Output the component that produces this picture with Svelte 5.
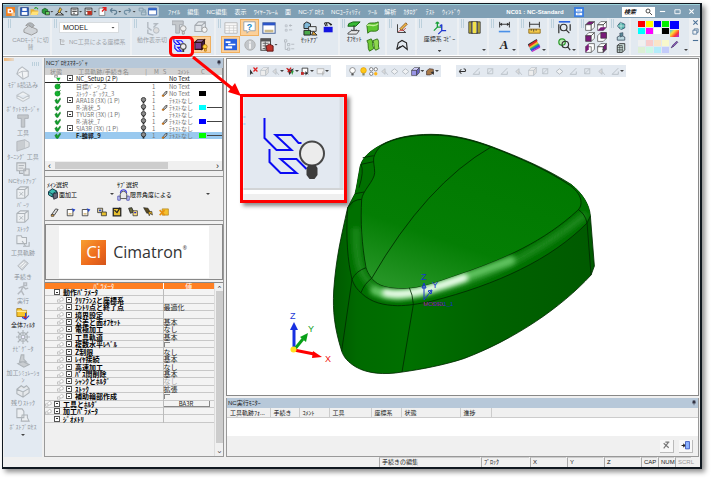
<script>
  const G = '#b3bac1';
  // Each icon is a list of [path, fill, stroke, stroke width] on a 16 x 16 grid.
  const cube = (a, b, c) => [
    ['M1 6L6 1H15L10 6Z', a, '#333', 1],
    ['M1 6H10V15H1Z', b, '#333', 1],
    ['M10 6L15 1V10L10 15Z', c, '#333', 1]
  ];
  const icons = {
    app: [['M0 0H16V16H0Z', '#f08020'], ['M3 3H10L13 7V11H3Z', '#fff'], ['M6 6H9V9H6Z', '#d05010'], ['M10 10H16V16H10Z', '#f7c48a']],
    save: [['M1 1H15V15H1Z', '#2c5cc0', '#12306e', 1], ['M4 2H12V7H4Z', '#fff'], ['M3 9H13V14H3Z', '#fff']],
    open: [['M1 4H7L8 6H14V14H1Z', '#e8b030'], ['M1 14L4 8H16L13 14Z', '#ffe27a'], ['M8 3C10 0 13 1 14 4', 'none', '#2a9a2a', 2]],
    part: [['M2 5L7 2L12 5V10L7 13L2 10Z', '#2a9a3a', '#104a18', 1], ['M8 8H15V14H8Z', '#62c85a', '#111', 1]],
    draft: [['M1 14H15L8 9Z', '#fff', '#111', 1.5], ['M5 9L9 1L12 4L8 11Z', '#f0c030', '#222', 1]],
    nc: [['M2 2H14V14H2Z', '#fff', '#222', 1.5], ['M4 5H12M4 8H12M5 11H9', 'none', '#333', 1.5]],
    nc2: [['M2 2H14V14H2Z', '#fff', '#222', 1.5], ['M4 5H12M4 8H12', 'none', '#333', 1.5], ['M6 7H14V14H6Z', '#c03020']],
    exit: [['M2 2H12V15H2Z', '#fff', '#555', 1], ['M7 8L14 1M8 1H14V7', 'none', '#e02020', 2.5]],
    undo: [['M2 6H10C15 6 15 13 9 13M2 6L6 2M2 6L6 10', 'none', '#5f7d92', 2]],
    redo: [['M14 6H6C1 6 1 13 7 13M14 6L10 2M14 6L10 10', 'none', '#6f8ea3', 2]],
    macro: [['M2 2H9V7H2ZM6 9H14V14H6Z', 'none', '#7c98aa', 1.5], ['M9 5H13V9', 'none', '#7c98aa', 1.5]],
    win: [['M1 2H15V14H1Z', '#fff', '#3560b0', 1.5], ['M1 2H15V6H1Z', '#2f62c8']],
    dockwin: [['M0 0H16V16H0Z', '#3d7fe0'], ['M3 3H13V7H3ZM3 9H13V13H3Z', '#fff'], ['M5 5H11M5 11H9', 'none', '#3d7fe0', 1]],
    cad: [['M1 9L6 5L15 9V12L9 15L1 12Z', '#d0d4d8', '#999', 1], ['M3 5C5 1 10 1 12 5L9 7L6 4Z', '#aeb4b9', '#999', 1]],
    axes: [['M3 2V13H11M3 2L1 4M3 2L5 4', 'none', '#999', 1.3], ['M6 4H10V8H6Z', 'none', '#aaa', 1]],
    motion: [['M3 1V7L7 10M3 9V13L9 15M9 3H13L9 7', 'none', G, 1.5], ['M9 10A3 3 0 1 0 15 10A3 3 0 1 0 9 10', '#ddd', G, 1]],
    tbulb: [['M0 1H12V5H8V14H4V5H0Z', '#c4c8cc', '#a5aab0', 1], ['M9 9A3 3 0 1 0 15 9A3 3 0 1 0 9 9M11 12H13V15H11Z', '#eee', '#999', 1]],
    boxbulb: [['M1 5L5 1H13V8L9 12H1ZM1 5H9V12M9 5L13 1', '#e4e8ec', '#a5aab0', 1.2], ['M9 10A3 3 0 1 0 15 10A3 3 0 1 0 9 10', '#f4f4f4', '#999', 1]],
    path: [['M2 0V5L5 8H9L5 4H10L12 6M3 8V12L6 15H10L6 11H10', 'none', '#1414ff', 1.2], ['M9 10A3 3 0 1 0 15 10A3 3 0 1 0 9 10', '#eee', '#555', 1.2], ['M11 13H13V16H11Z', '#333']],
    solid: [['M1 5L4 2H12L9 5Z', '#b58ac8', '#311', 1.2], ['M1 5H9V13H1Z', '#77458c', '#311', 1.2], ['M9 5L12 2V10L9 13Z', '#42204f', '#311', 1.2], ['M10 10A2.500 2.500 0 1 0 15 10A2.500 2.500 0 1 0 10 10M12 12H14V15H12Z', '#ffd23c', '#a60', 0.8]],
    grid: [['M1 2H15V14H1Z', '#fafafa', '#b5b5b5', 1], ['M1 5H15M1 8H15M1 11H15M6 5V14M11 5V14', 'none', '#c8c8c8', 0.8]],
    bubble: [['M1 1H15V12H8L5 15V12H1Z', '#fff', '#8b99a5', 1]],
    bar: [['M1 2H15V14H1Z', '#fff', '#4a68a0', 1.2], ['M1 2H15V5H1Z', '#2c55c8'], ['M3 10H13V13H3Z', '#c9b98a']],
    tree: [['M0 1H16V15H0Z', '#2a62e0'], ['M2 4H8V6H2ZM5 7H14V9H5ZM2 10H10V13H2Z', '#fff']],
    info: [['M1 8A7 7 0 1 0 15 8A7 7 0 1 0 1 8', '#c2c6ca', '#aaa', 1], ['M7 3H9V5H7ZM7 6H9V13H7Z', '#fff']],
    tabred: [['M1 1H12V14H1Z', '#eee', '#444', 1.2], ['M1 1H12V4H1Z', '#555'], ['M3 6H10M3 9H7M3 12H6M6 4V14', 'none', '#555', 1], ['M7 9L11 7L15 9V15H8Z', '#c0342a', '#511', 1]],
    dots: [['M2 3H5V6H2ZM2 10H5V13H2Z', 'none', G, 1.2], ['M8 4H13M8 11H13M10 2V6', 'none', G, 1.5]],
    tdots: [['M2 1H5V4H2ZM6 6H9V9H6ZM6 12H9V15H6Z', 'none', G, 1.2], ['M3 4V14H6M11 7H15M11 13H15', 'none', G, 1.2]],
    setup: [['M1 3L4 1L8 3V8H1Z', '#7fb8d8', '#222', 1], ['M6 6H14V11H6Z', '#e8eef2', '#333', 1], ['M1 10H8V15H1Z', '#4aa84a', '#222', 1], ['M11 11L15 15H9Z', '#e0a030', '#333', 1]],
    robot: [['M1 7H14V15H1Z', '#1414e0'], ['M2 1L4 6M5 1L6 6M3 1H8L12 5M8 1L13 4', 'none', '#222', 1.5]],
    offset: [['M2 3L7 1H15L10 6H1Z', '#36b836', '#0a5a0a', 1], ['M8 5V13M8 13L5 10M8 13L11 10', 'none', '#333', 1.3], ['M1 14L5 11H14L11 15H1Z', '#e8e8e8', '#444', 1]],
    leaf: [['M1 5C4 0 8 4 14 1V10C10 14 6 9 2 14Z', '#5fc832', '#2a6a12', 1], ['M1 5C6 3 9 8 14 3', 'none', '#c5f09a', 1.5]],
    leaf2: [['M1 3L6 1C9 4 6 8 9 12L4 15C1 11 4 7 1 3Z', '#6ecb35', '#2a6a12', 1], ['M8 3L13 1C16 5 13 8 15 12L11 14C8 11 10 7 8 3Z', '#8fd84f', '#2a6a12', 1]],
    sketch: [['M2 3V14H13L7 9L12 4', 'none', '#333', 1.2], ['M5 9L13 1L15 3L7 11Z', '#f2b548', '#7a4a10', 1], ['M3 13C7 9 9 14 13 8', 'none', '#d02020', 1]],
    curve: [['M1 14L3 5L8 2L14 5L15 14L9 9L4 12', 'none', '#222', 1.5], ['M1 14L6 10', 'none', '#222', 2]],
    ucs: [['M5 1V7M5 1L3 3M5 1L7 3M5 7L1 11M5 7H10', 'none', '#18a038', 1.5], ['M10 4V11H15M10 4L8 6M10 11L6 15', 'none', '#2038d0', 1.5]],
    slot: [['M1 1H15V15H1Z', '#c8b832', '#333', 1], ['M4 1H12V15H4Z', '#8a8a88', '#333', 1], ['M6 1H10V15H6Z', '#f2e24a']],
    dim: [['M2 1V8M14 1V8M2 4H14', 'none', '#333', 1.2], ['M2 4L5 2V6ZM14 4L11 2V6Z', '#333'], ['M1 12H15V14H1Z', '#4a90e8']],
    ruler: [['M2 1V8M14 1V8M2 4H14', 'none', '#333', 1.2], ['M1 10H15V15H1Z', '#f2c84a', '#8a6510', 1], ['M4 10V12M7 10V13M10 10V12', 'none', '#333', 1]],
    rainbow: [['M1 7L11 1L12 3L2 10Z', '#333'], ['M2 8L11 2L12 5L3 11Z', '#e02828'], ['M3 10L12 4L13 7L4 12Z', '#f0c030'], ['M3 12L13 6L14 8L4 14Z', '#30c060'], ['M4 13L14 7L15 10L5 15Z', '#3050e0'], ['M5 15L15 9V11L6 16Z', '#c030c0']],
    zoomfit: [['M1 0H15V2H1Z', '#2a62e0'], ['M3 8A4 4 0 1 0 11 8A4 4 0 1 0 3 8M10 11L14 15M1 4V15M15 4V12', 'none', '#333', 1.5]],
    zoomsel: [['M1 5A4 4 0 1 0 9 5A4 4 0 1 0 1 5', '#bfe8b8', '#2a9a2a', 1.5], ['M5 8A4 4 0 1 0 13 8A4 4 0 1 0 5 8M12 11L15 15', 'none', '#333', 1.5]],
    globe: [['M2 8L7 2L14 5V11L8 14Z', '#4fb0a8', '#235', 1], ['M2 8H14M8 2V14', 'none', '#e8f8f8', 1]],
    cyl: [['M2 8L8 5L14 8V13H2Z', '#bcd8e0', '#345', 1.2], ['M6 2L11 1V6L7 8Z', '#5a8a9a', '#345', 1]],
    sheet: [['M2 4L6 1H14V11L10 15H2Z', '#c8dcd8', '#222', 1.3], ['M2 7H11M2 11H11M6 4V15M2 4H10V15', 'none', '#333', 1]],
    pen: [['M2 14L5 9L12 2L14 4L7 11Z', '#8858b8', '#325', 1]],
    model: [['M1 9L8 15L14 12V6L7 1L3 4Z', '#f1f3f5', '#b5bac0', 1.2], ['M1 9L7 6L14 6M7 6L8 15', 'none', '#b5bac0', 1]],
    pocket: [['M1 6L8 2L15 6L8 10ZM1 6V9L8 13L15 9V6', '#eef1f3', '#c0c6cb', 1.2]],
    tool: [['M2 1H14V5H10V15H6V5H2Z', '#c4c8cc', '#a9aeb3', 1]],
    turn: [['M1 4L10 2V12L1 15Z', '#c9cdd1', '#b0b5ba', 1], ['M10 2L15 5V10L10 12', '#dfe2e5', '#b0b5ba', 1]],
    ncset: [['M1 1H11V10H1ZM4 10V13H8M9 8H15V15H9Z', '#e2e5e8', '#a9aeb3', 1.2], ['M3 4H9M3 7H8', 'none', '#a9aeb3', 1]],
    box: [['M1 4L5 1H14V10L10 14H1ZM1 4H10V14M10 4L14 1', '#eceff2', '#adb3b8', 1.2], ['M4 7L8 11M8 7L4 11', 'none', '#adb3b8', 1]],
    folder: [['M1 2H6L7 4H12V11H1Z', '#eceff2', '#adb3b8', 1.2], ['M7 8L11 14M8 14H15V9', 'none', '#adb3b8', 1.3]],
    proc: [['M2 9L9 2L14 6L7 14Z', '#d2d6da', '#b0b5ba', 1], ['M4 9L9 5M6 11L11 6', 'none', '#fff', 1]],
    run: [['M9 1H12V4H9ZM3 7L8 5L11 8L14 7M8 5L6 10L9 15M6 10L2 14', 'none', '#b5bac0', 1.7]],
    filter: [['M1 3H6L7 5H12V12H1Z', '#f7c52c', '#a97a10', 1], ['M1 6H12', 'none', '#fff1a8', 1.5], ['M11 8V15L7 13M11 15L15 11', 'none', '#2040e0', 1.3], ['M9 12H12V14H9Z', '#e02020']],
    wheel: [['M3 8A5 5 0 1 0 13 8A5 5 0 1 0 3 8M8 0V16M0 8H16M2 2L14 14M14 2L2 14', 'none', '#aeb4b9', 1.3], ['M6 8A2 2 0 1 0 10 8A2 2 0 1 0 6 8', '#eef', '#aeb4b9', 1]],
    sim: [['M6 1H9V6L12 9H4ZM2 11L8 9L15 12L9 15Z', '#c9cdd1', '#adb3b8', 1.2]],
    rest: [['M1 6L6 2L9 4L12 2L15 5V10L8 15L1 11ZM1 6L8 9L15 5M8 9V15', '#e5e8eb', '#adb3b8', 1.2]],
    post: [['M1 1H7L9 4V11H1ZM7 8H13V11L15 15H6Z', '#eceff2', '#adb3b8', 1.2]],
    ok: [['M2 8L6 4L8 9L14 2L15 5L9 15L5 14Z', '#12a02c', '#0a6a1a', 1]],
    okball: [['M2 8A6 6 0 1 0 14 8A6 6 0 1 0 2 8', '#14b430', '#0a7a1a', 1], ['M9 6L15 1', 'none', '#0a7a1a', 2]],
    oksetup: [['M1 1H8V5H1Z', '#eee', '#555', 1], ['M5 6L15 6L10 15Z', '#14b430']],
    bulb: [['M3 6A5 5 0 1 0 13 6A5 5 0 1 0 3 6', '#8a8a8a', '#222', 1.8], ['M6 11H10V15H6Z', '#222']],
    bulboff: [['M3 6A5 5 0 1 0 13 6A5 5 0 1 0 3 6', '#fff', '#666', 1.2], ['M6 11H10V15H6Z', '#555']],
    bulbon: [['M3 6A5 5 0 1 0 13 6A5 5 0 1 0 3 6', '#ffc818', '#d89000', 1], ['M6 11H10V15H6Z', '#886']],
    mill: [['M3 13L10 4L14 3L13 8L6 14Z', '#bbb', '#222', 1.4], ['M2 11H7V15H2Z', '#c8751c']],
    solidg: [['M2 5L7 1L13 4V8L7 12L2 9Z', '#3cbcb0', '#134', 1.3], ['M8 8L14 6V13L9 15Z', '#667', '#223', 1], ['M2 5L7 8L13 4M7 8V12', 'none', '#134', 1]],
    arch: [['M1 10H4V15H1ZM12 10H15V15H12Z', '#cdd6ff', '#44a', 1], ['M4 13V8A4 4 0 0 1 12 8V13Z', '#e8e8e8', '#555', 1.2], ['M4 6C5 1 11 1 12 6', 'none', '#44d', 1.3]],
    hand: [['M2 13L9 3L13 4L7 13Z', '#ddd', '#333', 1.3], ['M2 12H6V15H2Z', '#e0a040', '#333', 1]],
    form: [['M2 4H11V14H2Z', '#fff', '#333', 1.3], ['M9 2L15 4L12 8Z', '#2244cc'], ['M4 11H9', 'none', '#ca6', 2]],
    pair: [['M1 2H9V9H1Z', '#ffe9a0', '#333', 1.3], ['M7 8H15V14H7Z', '#e8c030', '#333', 1.3], ['M3 4H7V7H3Z', '#2244cc']],
    film: [['M2 2H14V14H2Z', '#e8c030', '#222', 2], ['M4 5L8 9L13 1', 'none', '#222', 2]],
    calc: [['M1 2L6 1L9 8L4 10Z', '#6a6a40', '#222', 1.3], ['M8 6H15V14H8Z', '#ffe080', '#333', 1.2], ['M10 9H13', 'none', '#22c', 2]],
    bug: [['M1 1L8 2L12 9L6 10Z', '#5a4a20', '#222', 1], ['M8 8L10 14L12 10L15 13L14 7Z', '#e8b020', '#222', 1]],
    close: [['M5 3H15V13H5Z', '#f4c030', '#a97a10', 1], ['M1 5L9 13M9 5L1 13', 'none', '#e89010', 2.5]],
    link: [['M1 9H7V14H1ZM5 8L10 3L14 5V10L8 12', '#fff', '#a8a8a8', 1.5]],
    pickx: [['M2 4V14L5 11L8 13Z', '#222'], ['M8 1L15 8M15 1L8 8', 'none', '#e02020', 2.2]],
    pickcube: cube('#eee', '#eee', '#ddd').map((p) => [p[0], p[1], G, 1]),
    pickg: [['M3 8L9 3V13ZM9 8L14 14', '#ddd', G, 1.3]],
    pickr: [['M2 2L8 5L14 2L11 8L6 14Z', '#333'], ['M1 2L9 9M3 9L9 1', 'none', '#d02020', 2.2], ['M9 8L14 6L11 14Z', '#2a9a3a']],
    pickb: [['M2 2H12V11H2Z', '#fff', '#333', 1.5], ['M8 7V15L11 12L14 14Z', '#222'], ['M0 9H5V14H0Z', '#c02828']],
    pickl: [['M2 3H14V12H2Z', '#f4f4f4', '#aaa', 1.3], ['M12 8V15', 'none', '#aaa', 1.5]],
    bulbs: [['M1 4A3 3 0 1 0 7 4A3 3 0 1 0 1 4M9 4A3 3 0 1 0 15 4A3 3 0 1 0 9 4M1 12A3 3 0 1 0 7 12A3 3 0 1 0 1 12', '#fff', '#555', 1.2], ['M9 12A3 3 0 1 0 15 12A3 3 0 1 0 9 12', '#ffb618']],
    dia: [['M8 3L14 8L8 13L2 8Z', '#f0f2f4', G, 1.6]],
    vcube: cube('#d6d4ff', '#9a96e8', '#6a66c4'),
    vbrown: [['M1 7L6 3L13 4V11L7 14H1Z', '#a87a48', '#433', 1.2], ['M8 9L14 8V14Z', '#333']],
    back: [['M2 8H11C15 8 14 3 10 3M2 8L6 4M2 8L6 12', 'none', '#333', 1.8]],
    snap: [['M2 13L13 2M2 13H13V8', 'none', G, 1.5]],
    snap2: [['M3 3H12V12H3ZM3 12L12 3', 'none', G, 1.3]],
    clear: [['M3 13L11 3M3 4L12 12M6 2H13', 'none', '#777', 2]],
    door: [['M8 1H15V14H8Z', '#8eb4ff', '#1f3fb0', 1.3], ['M1 8H7M7 8L4 5M7 8L4 11', 'none', '#222', 1.8]],
    lens: [['M2 6A4 4 0 1 0 10 6A4 4 0 1 0 2 6M9 9L14 14', 'none', '#222', 1.6]],
    pin: [['M5 2H11V8H5ZM3 8H13M8 8V14', '#334', '#334', 1.4]],
    cubeTop: cube('#7a1a7a', '#fff', '#fff'),
    cubeFront: cube('#fff', '#7a1a7a', '#fff'),
    cubeSide: cube('#fff', '#fff', '#7a1a7a'),
    cubeBot: [['M1 6L6 1H15L10 6ZM1 6H10V15H1ZM10 6L15 1V10L10 15', '#fff', '#333', 1], ['M1 15L6 10H15L10 15Z', '#7a1a7a']],
    cubeBack: [['M1 6L6 1H15V10L10 15H1Z', '#fff', '#333', 1], ['M6 1H15V10H6Z', '#7a1a7a', '#333', 1]],
    cubeLeft: [['M1 6L6 1H15V10L10 15H1ZM1 6H10V15', '#fff', '#333', 1], ['M1 6L6 1V10L1 15Z', '#7a1a7a']],
    minus: [['M2 8H14', 'none', 'currentColor', 2.5]],
    max: [['M2 4H14V13H2Z', 'none', 'currentColor', 2]],
    restore: [['M5 5V2H14V10H11M2 5H11V14H2Z', 'none', 'currentColor', 1.8]],
    cross: [['M3 3L13 13M13 3L3 13', 'none', 'currentColor', 2.5]]
  };

  const menus = ['ﾌｧｲﾙ', '編集', 'NC編集', '表示', 'ﾜｲﾔｰﾌﾚｰﾑ', '面', 'NC-ﾌﾟﾛｾｽ', 'NCﾕｰﾃｨﾘﾃｨ', 'ﾂｰﾙ', '解析', 'ｶﾀﾛｸﾞ', 'ﾃｽﾄ', 'ｳｨﾝﾄﾞｳ'];
  const quick = ['save', 'open', 'part+', 'draft+', 'nc+', 'nc2+', 'exit', 'undo+', 'redo+', 'macro', 'win'];
  const swatches = ['#f00', '#ff0', '#0000f0', '#0e0', '#0ff', '#f0f', '#fff', '#000'];
  const pale = ['#f0f0f0', '#f8cccc', '#fae4c8', '#f8f8cc', '#dcf0d4', '#ccf8e4', '#b4ecfa', '#c4ccfa'];
  const dock = [
    ['model', 'ﾓﾃﾞﾙ読込み'], ['pocket', 'ﾎﾟｹｯﾄﾏﾈｰｼﾞｬ'], ['tool', '工具'], ['turn', 'ﾀｰﾆﾝｸﾞ 工具'],
    ['ncset', 'NCｾｯﾄｱｯﾌﾟ'], ['box', 'ﾊﾟｰﾂ'], ['box', 'ｽﾄｯｸ'], ['folder', '工具軌跡'], ['proc', '手続き'],
    ['run', '実行'], ['filter', '全体ﾌｨﾙﾀ', true], ['wheel', 'ﾅﾋﾞｹﾞｰﾀ'], ['sim', '加工ｼﾐｭﾚｰｼｮ ﾝ'], ['rest', '残りｽﾄｯｸ'], ['post', 'ﾎﾟｽﾄﾌﾟﾛｾｽ']
  ];
  const rows = [
    { st: 'oksetup', name: 'NC_Setup (2 P)', open: true, text: 'No Text', head: true },
    { st: 'okball', name: '目標ﾊﾟｰﾂ_2', n: '1', text: 'No Text' },
    { st: 'okball', name: 'ｽﾄｯｸ - ﾎﾞｯｸｽ_3', n: '1', mill: true, text: 'No Text', color: '#000' },
    { st: 'ok', name: 'ARA18 (3X) (1 P)', open: true, bulb: true, n: '1', text: 'ﾃｷｽﾄなし' },
    { st: 'ok', name: 'R-清状_5', bulb: true, n: '1', mill: true, text: 'ﾃｷｽﾄなし', color: '#0ff', line: true },
    { st: 'ok', name: 'TYU5R (3X) (1 P)', open: true, bulb: true, n: '1', text: 'ﾃｷｽﾄなし' },
    { st: 'ok', name: 'R-清状_7', bulb: true, n: '1', mill: true, text: 'ﾃｷｽﾄなし', color: '#00f', line: true },
    { st: 'ok', name: 'SIA3R (3X) (1 P)', open: true, bulb: true, n: '1', text: 'ﾃｷｽﾄなし' },
    { st: 'ok', name: 'F-輪郭_9', bulb: true, n: '1', mill: true, text: 'ﾃｷｽﾄなし', color: '#0f0', line: true, sel: true }
  ];
  const params = [
    ['動作ﾊﾟﾗﾒｰﾀ', '', 'root'], ['ｸﾘｱﾗﾝｽと座標系', ''], ['ｴﾝﾄﾘ点と終了点', '最適化'], ['境界設定', ''],
    ['公差と面ｵﾌｾｯﾄ', '基本'], ['電極加工', 'なし'], ['工具軌道', '基本'], ['複数水平ﾚﾍﾞﾙ', 'check'],
    ['Z制限', 'なし'], ['ﾚｲﾔ接続', '基本'], ['高速加工', 'なし'], ['ﾊﾟｽ間削除', '基本'],
    ['ｼｬﾝｸとﾎﾙﾀﾞ', 'なし', 'dim'], ['ｽﾄｯｸ', '拡張'], ['補助輪部作成', 'check'],
    ['工具とﾎﾙﾀﾞ', 'button', 'top'], ['加工ﾊﾟﾗﾒｰﾀ', '', 'top'], ['ｼﾞｵﾒﾄﾘ', '', 'root']
  ];
  const procTools = ['hand', 'form', 'form', 'pair', 'film', 'calc', 'bug', 'close'];
  const viewTools = [
    ['pickx', 'pickcube', 'pickg+', 'pickr+', 'pickb+', 'pickl+'],
    ['bulboff', 'bulbon', 'bulbs', 'pickg', 'dia', 'dia', 'vcube+', 'vbrown+'],
    ['back', 'snap', 'snap2', 'snap', 'pickg', 'pickcube', 'snap2', 'dia', 'snap', 'snap2', 'pickg', 'snap+']
  ];
  const monitor = ['工具軌跡ﾌｫ...', '手続き', 'ｺﾒﾝﾄ', '工具', '座標系', '状態', '進捗', ''];
</script>

{#snippet icon(name, size = 12)}
  <svg class="ico" width={size} height={size} viewBox="0 0 16 16" aria-hidden="true">
    {#each icons[name] as [d, fill, stroke, w]}
      <path {d} {fill} stroke={stroke ?? 'none'} stroke-width={w ?? 0} />
    {/each}
    {#if name === 'bubble'}<text x="8" y="11" class="q">?</text>{/if}
  </svg>
{/snippet}

{#snippet tool(key, size = 10)}
  <button class="tb" aria-label={key}>
    {@render icon(key.replace('+', ''), size)}
    {#if key.endsWith('+')}<span class="caret"></span>{/if}
  </button>
{/snippet}

<div class="page">
  <div class="window">
    <header class="title">
      <span class="logo">{@render icon('app', 9)}</span>
      <div class="quick">
        {#each quick as q}{@render tool(q, 9)}{/each}
      </div>
      <nav>
        {#each menus as m}<a href="#menu">{m}</a>{/each}
      </nav>
      <div class="caption">NC01 : NC-Standard {@render icon('dockwin', 10)}</div>
      <label class="search"><input aria-label="検索" value="検索" />{@render icon('lens', 8)}</label>
      <div class="winbtns">
        <button class="tb" aria-label="Minimize">{@render icon('minus', 7)}</button>
        <button class="tb" aria-label="Maximize">{@render icon('max', 7)}</button>
        <button class="tb" aria-label="Close">{@render icon('cross', 7)}</button>
      </div>
    </header>

    <div class="ribbon">
      <section class="g g1">
        <i class="grip"></i>
        <button class="big dim">{@render icon('cad', 15)}<span>CADﾓｰﾄﾞに切<br />替</span></button>
      </section>
      <section class="g g2">
        <i class="grip"></i>
        <div class="ucsbox">
          <div class="combo"><select aria-label="UCS"><option>MODEL</option></select><span class="caret"></span></div>
          <button class="inline dim">{@render icon('axes', 8)} NC工具による座標系</button>
        </div>
      </section>
      <section class="g g3">
        <i class="grip"></i>
        <button class="big dim motion">{@render icon('motion', 15)}<span>動作表示切</span></button>
        <div class="cells two">
          {@render tool('tbulb', 15)}{@render tool('boxbulb', 14)}
          {@render tool('path', 15)}<span class="on">{@render tool('solid', 14)}</span>
        </div>
      </section>
      <section class="g g4">
        <i class="grip"></i>
        <div class="cells four">
          {@render tool('grid', 14)}<span class="on">{@render tool('bubble', 13)}</span>{@render tool('bar', 14)}{@render tool('dots', 10)}
          <span class="on">{@render tool('tree', 13)}</span>{@render tool('info', 12)}{@render tool('tabred+', 14)}{@render tool('tdots', 12)}
        </div>
        <button class="big">{@render icon('setup', 15)}<span>ｾｯﾄｱﾌﾟ</span></button>
        <div class="robot">{@render tool('robot', 11)}</div>
      </section>
      <section class="g g5">
        <i class="grip"></i>
        <button class="big">{@render icon('offset', 14)}<span>ｵﾌｾｯﾄ</span></button>
        <div class="col">{@render tool('leaf', 14)}{@render tool('leaf2', 14)}</div>
      </section>
      <section class="g g6"><i class="grip"></i><div class="col">{@render tool('sketch', 12)}{@render tool('curve', 12)}</div></section>
      <section class="g g7">
        <i class="grip"></i>
        <button class="big wide">{@render icon('ucs', 14)}<span>座標系 ｺﾋﾟｰ</span><span class="caret"></span></button>
      </section>
      <section class="g s"><i class="grip"></i><div class="col">{@render tool('slot', 13)}<span></span></div><span class="caret"></span></section>
      <section class="g s"><i class="grip"></i><div class="col">{@render tool('dim', 13)}<button class="tb letter">A</button></div><span class="caret"></span></section>
      <section class="g s"><i class="grip"></i><div class="col">{@render tool('ruler', 13)}{@render tool('rainbow', 14)}</div><span class="caret"></span></section>
      <section class="g s"><i class="grip"></i><div class="col">{@render tool('zoomfit', 13)}{@render tool('zoomsel', 13)}</div><span class="caret"></span></section>
      <section class="g s">
        <i class="grip"></i>
        <div class="cells cubes">
          {#each ['cubeTop', 'cubeBot', 'cubeFront', 'cubeBack', 'cubeLeft', 'cubeSide'] as c}{@render tool(c, 10)}{/each}
        </div>
        <span class="caret"></span>
      </section>
      <section class="g g13">
        <i class="grip"></i>
        <div class="cells one">{@render tool('globe', 10)}{@render tool('cyl', 10)}{@render tool('sheet', 10)}</div>
      </section>
      <section class="g g14">
        <div class="palette">
          <div class="sw">{#each swatches as c}<button aria-label={c} style="background:{c}"></button>{/each}</div>
          <div class="sw">{#each pale as c}<button aria-label={c} style="background:{c}"></button>{/each}</div>
        </div>
        <div class="current"><b></b><em></em>{@render icon('pen', 9)}</div>
        <span class="caret"></span>
      </section>
      <div class="mdi">
        <button class="tb" aria-label="Close document">{@render icon('cross', 7)}</button>
        <button class="tb" aria-label="Restore document">{@render icon('restore', 7)}</button>
        <button class="tb" aria-label="Minimize document">{@render icon('minus', 7)}</button>
      </div>
    </div>

    <div class="main">
      <aside class="dock">
        <i class="tab"></i>
        <i class="grip flat"></i>
        {#each dock as [ic, label, live]}
          <button class:live>{@render icon(ic, 14)}<span>{label}</span></button>
        {/each}
        <span class="caret"></span>
      </aside>

      <div class="side">
        <div class="bar">NCﾌﾟﾛｾｽﾏﾈｰｼﾞｬ {@render icon('pin', 6)}</div>
        <div class="list">
          <table class="nc">
            <thead>
              <tr><th class="c1">状態</th><th class="c2">工具軌跡/手続き名</th><th class="c3">|</th><th class="c4">M</th><th class="c5">S</th><th class="c6">ｺﾒﾝﾄ</th><th class="c7">C</th><th></th></tr>
            </thead>
            <tbody>
              {#each rows as r}
                <tr class:sel={r.sel} class:head={r.head}>
                  <td class="st">{@render icon(r.st, 7)}</td>
                  <td class:child={!r.open}>
                    {#if r.open}<button class="exp" aria-label="Collapse {r.name}"></button>{/if}{r.name}
                  </td>
                  <td>{#if r.bulb}{@render icon('bulb', 7)}{/if}</td>
                  <td class="num">{r.n ?? ''}</td>
                  <td>{#if r.mill}{@render icon('mill', 7)}{/if}</td>
                  <td class="txt">{r.text}</td>
                  <td>{#if r.color}<b class="chip" style="background:{r.color}"></b>{/if}</td>
                  <td>{#if r.line}<hr />{/if}</td>
                </tr>
              {/each}
            </tbody>
          </table>
          <div class="hscroll"><span>‹</span><i></i><span>›</span></div>
        </div>

        <div class="choose">
          <div class="pick">
            <label for="main">ﾒｲﾝ選択</label>
            <div>{@render icon('solidg', 12)}<select id="main"><option>面加工</option></select><span class="caret"></span></div>
          </div>
          <div class="pick more">
            <label for="sub">ｻﾌﾞ選択</label>
            <div>{@render icon('arch', 13)}<select id="sub"><option>限界角度による</option></select><span class="caret"></span></div>
          </div>
        </div>
        <div class="proctools">{#each procTools as t}{@render tool(t, 10)}{/each}</div>

        <div class="banner">
          <div><span class="ci">Ci</span><span class="brand">Cimatron<sup>®</sup></span></div>
        </div>

        <div class="params">
          <div class="ptable">
            <table>
              <thead><tr><th>ﾊﾟﾗﾒｰﾀ</th><th class="val">値</th></tr></thead>
              <tbody>
                {#each params as [name, value, kind]}
                  <tr>
                    <td class={kind ?? 'leafrow'}>
                      <span class="cell">
                        {#if kind !== 'root'}{@render icon('link', 7)}{/if}
                        <button class="exp" aria-label="Expand {name}"></button>{name}
                      </span>
                    </td>
                    <td class="v" class:off={kind === 'dim'}>
                      {#if value === 'check'}<input type="checkbox" aria-label={name} />
                      {:else if value === 'button'}<button class="ba">BA3R</button>
                      {:else}{value}{/if}
                    </td>
                  </tr>
                {/each}
              </tbody>
            </table>
          </div>
          <div class="vscroll"><span>‹</span><i></i><span>›</span></div>
        </div>
      </div>

      <div class="work">
        <div class="view">
          <svg class="scene" width="474" height="338" viewBox="226 58 474 338">
            <defs>
              <linearGradient id="top" x1="400" y1="40" x2="240" y2="505" gradientUnits="userSpaceOnUse">
                <stop offset="0" stop-color="#007800" /><stop offset="0.65" stop-color="#047e04" /><stop offset="1" stop-color="#259425" />
              </linearGradient>
              <linearGradient id="wall" x1="0" y1="0" x2="790" y2="0" gradientUnits="userSpaceOnUse">
                <stop offset="0" stop-color="#005800" /><stop offset="0.1" stop-color="#006a00" /><stop offset="0.3" stop-color="#007000" />
                <stop offset="0.6" stop-color="#006200" /><stop offset="1" stop-color="#005a00" />
              </linearGradient>
              <filter id="soft" x="-20%" y="-50%" width="140%" height="200%"><feGaussianBlur stdDeviation="8" /></filter>
              <clipPath id="rim"><path d="M50 260C44 350 50 420 63 475C72 500 82 510 92 517C120 545 160 553 200 554C230 554 260 548 300 541C500 490 660 415 768 306L778 285C778 255 765 240 745 215L750 245L742 266C640 360 520 415 380 462C320 483 270 502 220 503C170 503 140 495 122 472C112 458 108 450 105 440C92 370 88 300 92 235Z" /></clipPath>
            </defs>
            <g transform="translate(330 120) scale(.3334)" fill="none" stroke="#002a00" stroke-width="2.500">
              <path fill="url(#wall)" d="M85 150C88 110 120 88 150 72C190 50 240 40 300 40C370 40 430 58 480 76C570 110 650 145 720 190C755 218 775 250 778 285L790 435L780 462C690 560 550 655 400 712C340 732 270 745 213 753C160 762 110 758 75 738C50 723 38 708 32 690C10 620 5 570 8 510C15 410 30 350 50 260L72 218C78 195 80 175 85 150Z" />
              <path fill="#007000" stroke="none" d="M85 150C88 110 120 88 150 72L480 76L720 190C755 218 775 250 778 285L768 306C660 415 500 490 300 541C230 554 160 553 92 517L63 475C50 420 44 350 50 260L72 218C78 195 80 175 85 150Z" />
              <path fill="url(#top)" d="M150 74C190 51 240 42 300 42C370 42 430 60 480 78C570 112 650 148 718 194C738 210 750 225 750 245C750 255 746 262 740 268C640 360 520 415 380 462C320 483 270 502 220 503C170 503 140 495 122 472C112 458 108 450 105 440C92 370 88 300 92 235C94 210 130 180 131 155C131 135 126 125 128 110C132 95 140 85 150 74Z" />
              <g clip-path="url(#rim)" stroke-linecap="round" filter="none">
                <path stroke="#1a881a" stroke-width="22" filter="url(#soft)" d="M75 330C75 440 90 500 200 528C400 510 600 410 758 285" />
                <path stroke="#62c462" stroke-width="26" filter="url(#soft)" d="M130 508C200 545 300 505 540 418" />
                <path stroke="#f0fff0" stroke-width="22" filter="url(#soft)" d="M165 515C220 528 290 508 400 470" />
              </g>
              <path d="M768 306C660 415 500 490 300 541C260 549 230 554 200 554C160 553 120 545 92 517C78 505 70 495 63 475C50 420 44 350 50 260" />
              <path d="M768 306L778 285M742 266Q762 278 768 306L780 462M122 472Q285 190 480 78M63 475L32 690M105 440Q75 450 63 475M122 472Q100 488 90 515M235 500Q245 520 247 550L213 753M50 260Q65 235 92 235M72 218L100 213M95 110L128 104M90 130L128 122M84 200Q100 150 90 130" />
            </g>
            <g class="ax">
              <path d="M293 349V327" stroke="#1830e0" stroke-width="3" /><path d="M289 329L293 321L297 329Z" fill="#1830e0" />
              <path d="M293 349L302 338" stroke="#08a018" stroke-width="3" /><path d="M299 336L307 332L305 341Z" fill="#08a018" />
              <path d="M293 349L313 353" stroke="#f00" stroke-width="3" /><path d="M312 350L321 356L311 357Z" fill="#f00" />
              <circle cx="292.500" cy="348.500" r="3" fill="#ffe020" />
              <text x="289" y="318" fill="#2438d8">Z</text><text x="307" y="331" fill="#10a020">Y</text><text x="324" y="361" fill="#f01010">X</text>
              <path d="M423 299V284M423 299L430 290M421 287L423 282L425 287ZM427 290L431 289L430 293Z" stroke="#1838c8" fill="none" />
              <text x="420" y="279" fill="#1838c8">Z</text><text x="431" y="287" fill="#1838c8">Y</text>
              <text x="422" y="305" fill="#c02020" class="sm">MODEL</text><text x="423" y="305" fill="#1830c0" class="sm">UCS601_1</text>
            </g>
          </svg>
          <div class="floats">
            {#each viewTools as t}
              <div class="float">{#each t as k}{@render tool(k, 9)}{/each}</div>
            {/each}
          </div>
        </div>
        <div class="monitor">
          <div class="bar">NC実行ﾓﾆﾀｰ {@render icon('pin', 6)}</div>
          <div class="mbody">
            <table><thead><tr>{#each monitor as m, i}<th class="m{i}">{m}</th>{/each}</tr></thead></table>
          </div>
          <div class="mfoot">
            <button aria-label="Clear">{@render icon('clear', 9)}</button>
            <button aria-label="Exit">{@render icon('door', 9)}</button>
          </div>
        </div>
      </div>
    </div>

    <footer class="status">
      <span class="s1">手続きの編集</span><span class="s2">ﾌﾞﾛｯｸ</span><span class="s3">X</span><span class="s3">Y</span><span class="s3">Z</span>
      <span class="k">CAP</span><span class="k">NUM</span><span class="k off">SCRL</span>
    </footer>
  </div>

  <div class="mark"></div>
  <svg class="arrow" width="54" height="46" viewBox="0 0 54 46" aria-hidden="true">
    <path d="M1 1L42 34" stroke="#f00" stroke-width="3" /><path d="M49 40L36 36L43 27Z" fill="#f00" />
  </svg>
  <div class="callout">
    <svg width="100" height="103" viewBox="244 97 100 103" aria-hidden="true">
      <path d="M244 97H344V200H244Z" fill="#e3e9f1" />
      <path d="M340 97H344V188H340Z" fill="#d6dce3" /><path d="M244 188H344V190H244Z" fill="#d2d4d6" />
      <path d="M244 190H344V194H244Z" fill="#fff" /><path d="M244 194H344V200H244Z" fill="#efefef" />
      <path d="M244 116H246V118H244ZM244 123H246V125H244Z" fill="#a8dcf4" />
      <g fill="none" stroke="#0a0af4" stroke-width="2">
        <path d="M265 118V138L277 150H292L276 135H292L299 143H302" />
        <path d="M270 149V162L281 173H297L281 159H297L307 169" />
      </g>
      <circle cx="312.500" cy="153.500" r="12" fill="#ececec" stroke="#484848" stroke-width="2" />
      <path d="M309 165H316L318 168V175L315 179H310L307 175V168Z" fill="#3c3c3c" />
    </svg>
  </div>
</div>

<style>
  :global(body) { margin: 0; background: #fff; }
  * { box-sizing: border-box; }
  .page {
    position: relative; height: 100vh; padding: 3px 11px 9px 2px;
    font: 6px/8px 'Liberation Sans', 'Noto Sans CJK JP', sans-serif; color: #222; overflow: hidden;
  }
  button, input, select { font: inherit; color: inherit; margin: 0; padding: 0; border: 0; background: none; border-radius: 0; }
  select { appearance: none; }
  .ico { display: block; flex: none; }
  .q { font: bold 11px 'Liberation Sans', sans-serif; fill: #1687c4; text-anchor: middle; }
  .window {
    height: 100%; display: flex; flex-direction: column; border: 1px solid #101820; border-bottom-width: 2px; border-right-width: 2px;
    background: #f0f0f0; box-shadow: 3px 3px 5px rgba(0, 0, 0, 0.45);
  }
  .tb { display: flex; align-items: center; justify-content: center; }
  .caret { flex: none; width: 4px; height: 2px; background: #444; clip-path: polygon(0 0, 100% 0, 50% 100%); }

  .title { flex: none; height: 14px; display: flex; align-items: center; background: #7f9fb4; border-top: 1px solid #9fd4dc; padding: 0 5px 0 3px; color: #fff; }
  .logo { width: 12px; }
  .quick { display: flex; align-items: center; justify-content: space-between; width: 141px; height: 11px; padding: 0 2px; background: #b9cad6; border-radius: 2px; }
  nav { display: flex; flex: none; justify-content: space-between; width: 292px; margin-left: 9px; }
  nav a { color: #fff; text-decoration: none; white-space: nowrap; }
  .caption { flex: 1; display: flex; align-items: center; justify-content: center; gap: 10px; font-weight: bold; white-space: nowrap; padding-left: 8px; }
  .search { display: flex; align-items: center; width: 33px; height: 10px; padding: 0 2px; background: #fff; color: #111; }
  .search input { flex: 1; min-width: 0; height: 9px; font-style: italic; font-weight: bold; outline: 0; }
  .winbtns { display: flex; justify-content: space-between; width: 36px; margin-left: 4px; }

  .ribbon { flex: none; height: 38px; display: flex; background: #e9edf1; border-bottom: 1px solid #fff; overflow: hidden; }
  .g { position: relative; flex: none; display: flex; padding: 1px 0 1px 2px; background: #e2e9f0; border-right: 2px solid #edf0f3; }
  .grip { flex: none; width: 3px; height: 9px; background: repeating-linear-gradient(90deg, #bcd0dc 0 1px, transparent 1px 2px); }
  .g > .caret { position: absolute; right: 1px; bottom: 4px; }
  .g1 { width: 49px; padding-left: 5px; }
  .g2 { width: 80px; }
  .g3 { width: 84px; }
  .g4 { width: 124px; }
  .g5 { width: 47px; }
  .g6 { width: 30px; }
  .g7 { width: 42px; }
  .s { width: 30px; }
  .g13 { width: 22px; }
  .g14 { flex: 1 0 60px; padding-left: 7px; }
  .big { display: flex; flex-direction: column; align-items: center; flex: 1; line-height: 7px; padding-top: 2px; gap: 1px; white-space: nowrap; }
  .big .caret { margin-top: 6px; }
  .dim { color: #9aa0a6; }
  .motion { flex: 0 0 30px; }
  .ucsbox { display: flex; flex-direction: column; gap: 5px; padding: 3px 0 0 2px; width: 62px; }
  .combo { display: flex; align-items: center; height: 11px; padding: 0 3px; border: 1px solid #d8dcdf; background: #fff; font-size: 7px; }
  .combo select { flex: 1; min-width: 0; }
  .inline { display: flex; align-items: center; gap: 2px; white-space: nowrap; }
  .cells { display: grid; }
  .cells.two { grid-template-columns: 24px 20px; grid-template-rows: 17px 17px; }
  .cells.four { grid-template-columns: 19px 19px 20px 20px; grid-template-rows: 17px 17px; }
  .cells.cubes { grid-template: repeat(3, 11px) / 12px 12px; padding-top: 1px; }
  .cells.one { grid-template: repeat(3, 11px) / 14px; padding-top: 1px; }
  .on { display: grid; background: #fbd09a; border: 1px solid #f0b060; }
  .robot { padding: 3px 4px 0 2px; }
  .col { display: grid; grid-template-rows: 17px 17px; flex: 1; padding-right: 3px; }
  .letter { font: italic bold 13px 'Liberation Serif', serif; }
  .palette { display: flex; flex-direction: column; gap: 5px; padding-top: 2px; }
  .sw { display: grid; grid-template: repeat(2, 7px) / repeat(4, 7px); gap: 0 1px; }
  .sw button { width: 7px; height: 6px; }
  .current { padding: 2px 0 0 1px; display: flex; flex-direction: column; gap: 1px; }
  .current b { width: 9px; height: 8px; background: #00f; }
  .current em { width: 9px; height: 7px; margin-bottom: 2px; background: linear-gradient(135deg, #3cf, #fd3, #f33, #93f); }
  .mdi { width: 15px; display: flex; flex-direction: column; gap: 2px; align-items: center; padding-top: 1px; background: #eef0f2; color: #4a7096; }

  .main { flex: 1; min-height: 0; display: flex; gap: 2px; border-top: 1px solid #a8a8a8; padding: 1px 1px 0 0; }
  .dock { flex: none; width: 38px; margin-left: 1px; display: flex; flex-direction: column; align-items: center; background: #e3eaf2; overflow: hidden; }
  .tab { align-self: flex-start; width: 10px; height: 3px; background: linear-gradient(90deg, #f0b878, #e4d8cc); }
  .grip.flat { align-self: flex-end; width: 7px; height: 4px; margin: 1px 3px 0 0; }
  .dock button { flex: none; display: flex; flex-direction: column; align-items: center; gap: 2px; width: 36px; min-height: 24px; color: #8e959c; line-height: 7px; }
  .dock button.live { color: #222; }
  .dock .caret { margin-top: 2px; }

  .side { flex: none; width: 180px; display: flex; flex-direction: column; border: 1px solid #999; border-width: 0 1px 1px; background: #f0f0f0; }
  .bar { flex: none; display: flex; justify-content: space-between; align-items: center; height: 10px; padding: 0 1px; background: #b7c8d9; }
  .list { height: 103px; border: 1px solid #888; border-width: 0 1px 1px 0; background: #fff; display: flex; flex-direction: column; justify-content: space-between; }
  table { border-collapse: collapse; border-spacing: 0; table-layout: fixed; width: 100%; }
  th, td { padding: 0; text-align: left; white-space: nowrap; font-weight: normal; }
  .nc { font: 6px/7px 'Noto Sans CJK JP', sans-serif; color: #777; }
  .nc tr { height: 7px; }
  .nc th { line-height: 7px; background: #d2d2d2; color: #888; text-align: center; }
  .nc .c1 { width: 22px; }
  .nc .c2 { width: 73px; }
  .nc .c3 { width: 12px; }
  .nc .c4 { width: 9px; }
  .nc .c5 { width: 7px; }
  .nc .c6 { width: 31px; }
  .nc .c7 { width: 8px; }
  .nc .head { color: #222; border-bottom: 1px solid #222; }
  .nc .sel { background: #99c9ef; }
  .nc .sel td:nth-child(2) { color: #111; font-weight: bold; }
  .nc .st { padding-left: 9px; }
  .nc .child { padding-left: 9px; }
  .nc .txt { padding-left: 1px; }
  .exp { position: relative; display: inline-block; flex: none; width: 6px; height: 6px; margin-right: 3px; border: 1px solid #555; background: linear-gradient(#333, #333) center / 2px 1px no-repeat #fff; vertical-align: top; }
  .chip { display: block; width: 7px; height: 5px; }
  hr { margin: 0; border: 0; height: 1px; background: #444; }
  .hscroll { display: flex; align-items: center; height: 9px; background: #f0f0f0; font-size: 9px; padding: 0 3px; }
  .hscroll i { width: 113px; height: 7px; margin: 0 auto 0 4px; background: #cdcdcd; }
  .choose { display: flex; margin-top: 5px; height: 28px; padding: 4px 3px 0 2px; border-top: 1px solid #999; font: 6px/7px 'Noto Sans CJK JP', sans-serif; color: #000; }
  .pick { width: 70px; }
  .pick.more { flex: 1; }
  .pick div { display: flex; align-items: center; height: 12px; }
  .pick select { flex: 1; min-width: 0; }
  .pick .caret { margin-right: 3px; }
  .pick.more .caret { margin-right: 10px; }
  .proctools { display: flex; justify-content: space-between; height: 17px; padding: 0 54px 0 5px; border-bottom: 1px solid #999; }
  .banner { margin-top: 3px; height: 56px; border: 1px solid #888; padding: 1px 13px; }
  .banner div { height: 100%; display: flex; align-items: center; justify-content: center; gap: 7px; background: #fff; }
  .ci { display: grid; place-items: center; width: 25px; height: 25px; background: linear-gradient(135deg, #f7a030, #ee6a1c 60%, #d4541a); color: #fff; font: 17px/20px 'Open Sans', sans-serif; }
  .brand { font: 16px/24px 'Open Sans', sans-serif; color: #333; }
  sup { font-size: 5px; line-height: 5px; vertical-align: 8px; }
  .params { flex: 1; min-height: 0; display: flex; margin-top: 2px; border-top: 1px solid #888; }
  .ptable { flex: 1; background: #f0f0f0; }
  .ptable table { height: 140px; font: 7px/6px 'Noto Sans CJK JP', sans-serif; color: #222; background: #fff; }
  .ptable th { background: #ff7f22; color: #fff; text-align: center; }
  .ptable th.val { width: 51px; border-left: 1px solid #fff; }
  .ptable tbody tr { background: #f3f3f3; border-bottom: 1px solid #c8c8c8; }
  .ptable tbody td:first-child { font-weight: bold; color: #000; }
  .ptable .v { border-left: 1px solid #bbb; }
  .cell { display: flex; align-items: center; height: 6px; line-height: 6px; }
  .cell .ico { margin-right: 2px; }
  .root .cell { padding-left: 9px; }
  .leafrow .cell, .dim .cell { padding-left: 12px; }
  .v input { display: block; appearance: none; width: 6px; height: 5px; border: 1px solid #888; border-width: 1px 0 0 1px; }
  .v.off { color: #aaa; }
  .ba { display: block; width: 46px; height: 6px; line-height: 5px; border: 1px solid #888; border-width: 0 1px 1px 0; text-align: center; font-size: 6px; }
  .vscroll { width: 9px; display: flex; flex-direction: column; align-items: center; justify-content: space-between; border-left: 1px solid #ddd; font-size: 8px; }
  .vscroll span { height: 8px; line-height: 8px; transform: rotate(90deg); }
  .vscroll i { width: 7px; flex: 1; margin-bottom: 5px; background: #cdcdcd; }

  .work { flex: 1; min-width: 0; display: flex; flex-direction: column; gap: 2px; }
  .view { position: relative; flex: 1; min-height: 0; background: #fff; border: 1px solid #888; overflow: hidden; }
  .scene { position: absolute; left: 0; top: 0; }
  .ax text { font: 9px 'Liberation Sans', sans-serif; }
  .ax text.sm { font-size: 6px; }
  .floats { position: relative; display: flex; gap: 15px; padding: 6px 0 0 20px; }
  .float { display: flex; align-items: center; justify-content: space-between; height: 12px; padding: 0 2px; background: #e3e9f0; }
  .float:nth-child(1) { width: 84px; }
  .float:nth-child(2) { width: 95px; }
  .float:nth-child(3) { width: 170px; }
  .monitor { flex: none; height: 59px; display: flex; flex-direction: column; border: 1px solid #999; border-top: 0; }
  .mbody { height: 28px; background: linear-gradient(#f0f0f0 9px, #fff 9px); font: 6px/9px 'Noto Sans CJK JP', sans-serif; }
  .mbody th { padding-left: 3px; border-right: 1px solid #ccc; border-bottom: 1px solid #ccc; color: #111; }
  .m0 { width: 43px; }
  .m1 { width: 29px; }
  .m2 { width: 30px; }
  .m3 { width: 42px; }
  .m4 { width: 30px; }
  .m5 { width: 59px; }
  .m6 { width: 31px; }
  .mbody th.m7 { border-right: 0; }
  .mfoot { flex: 1; display: flex; justify-content: flex-end; align-items: center; gap: 5px; padding-right: 5px; }
  .mfoot button { display: grid; place-items: center; width: 14px; height: 13px; background: #f8f8f8; border: 1px solid #bbb; border-width: 0 1px 1px 0; }

  .status { flex: none; height: 10px; display: flex; justify-content: flex-end; gap: 1px; padding-right: 9px; line-height: 9px; }
  .status span { padding-left: 2px; border-left: 1px solid #aaa; border-top: 1px solid #ccc; white-space: nowrap; }
  .s1 { width: 101px; }
  .s2 { width: 48px; }
  .s3 { width: 36px; }
  .k { width: 16px; }
  .off { color: #999; }

  .mark { position: absolute; left: 169px; top: 36px; width: 25px; height: 21px; border: 3px solid #f00; border-radius: 5px; }
  .arrow { position: absolute; left: 192px; top: 56px; }
  .callout { position: absolute; left: 240px; top: 94px; width: 107px; height: 109px; border: 3px solid #f00; box-shadow: 3px 3px 4px rgba(0, 0, 0, 0.45); }
  .callout svg { display: block; width: 100%; height: 100%; }
</style>
